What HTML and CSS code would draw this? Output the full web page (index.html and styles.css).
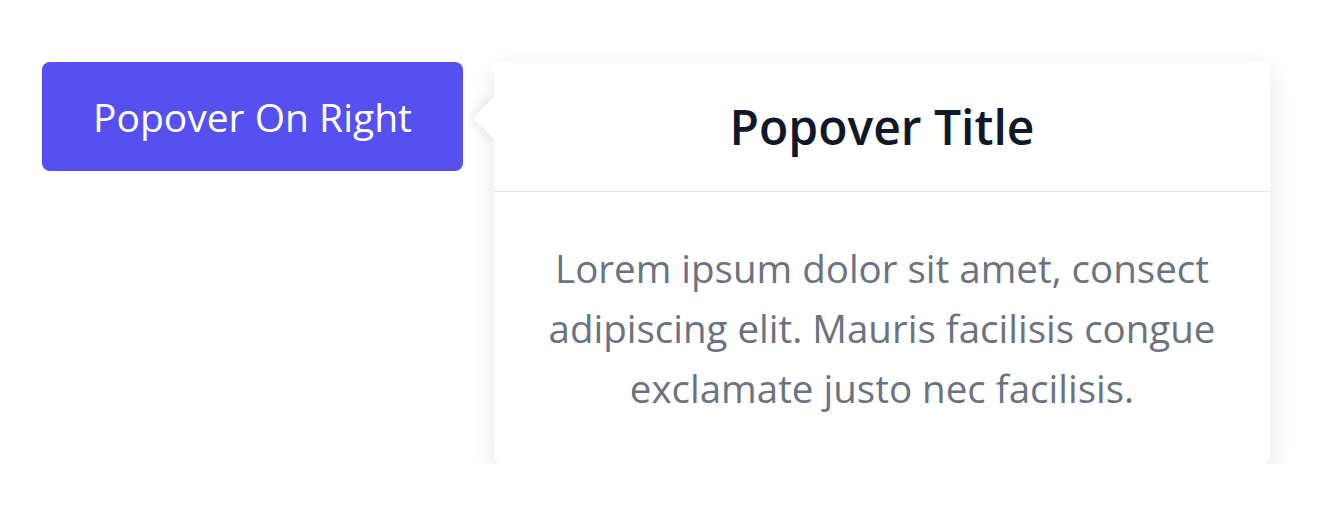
FILE: index.html
```html
<!DOCTYPE html>
<html lang="en">
<head>
    <meta charset="UTF-8">
    <meta name="viewport" content="width=device-width, initial-scale=1.0">
    <title>Popover On Right</title>
    <link rel="stylesheet" href="styles.css">
</head>
<body>

<div class="demo">
    <button class="trigger">Popover On Right</button>

    <div class="popover">
        <div class="popover-header">
            <h3>Popover Title</h3>
        </div>
        <div class="popover-body">
            <p>Lorem ipsum dolor sit amet, consect adipiscing elit. Mauris facilisis congue exclamate justo nec facilisis.</p>
        </div>
    </div>
</div>

</body>
</html>
```

FILE: styles.css
```css
body {
    font-family: "Open Sans", "Noto Sans", sans-serif;
    margin: 0;
    padding: 0;
    background-color: #ffffff;
}
.demo {
    display: flex;
    align-items: flex-start;
    gap: 31px;
    padding: 62px 0 0 42px;
}
.trigger {
    width: 421px;
    height: 109px;
    border: none;
    border-radius: 8px;
    background-color: #5750F1;
    color: #ffffff;
    font-family: inherit;
    font-size: 39px;
    font-weight: 500;
    cursor: pointer;
}
.popover {
    position: relative;
    width: 776px;
    background-color: #ffffff;
    border-radius: 8px;
    box-shadow: 0 8px 28px rgba(0, 0, 0, 0.1);
}
/* arrow pointing at the button */
.popover::before {
    content: "";
    position: absolute;
    left: -15px;
    top: 41px;
    width: 30px;
    height: 30px;
    background-color: #ffffff;
    transform: rotate(45deg);
    box-shadow: -3px 3px 10px rgba(0, 0, 0, 0.07);
}
.popover-header {
    position: relative;
    height: 129px;
    display: flex;
    align-items: center;
    justify-content: center;
    border-bottom: 1px solid #E5E7EB;
    background-color: #ffffff;
    border-radius: 8px 8px 0 0;
}
.popover-header h3 {
    margin: 0;
    font-size: 48px;
    font-weight: 600;
    color: #111928;
}
.popover-body {
    padding: 46px 40px;
    text-align: center;
}
.popover-body p {
    margin: 0;
    font-size: 38.5px;
    line-height: 60px;
    color: #6B7280;
}
```
